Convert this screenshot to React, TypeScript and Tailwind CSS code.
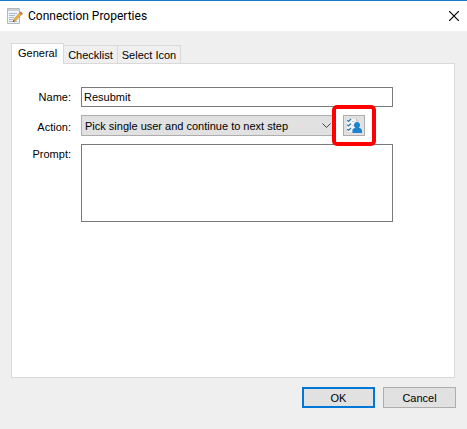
import { useState } from 'react'

const tabs = ['General', 'Checklist', 'Select Icon']

const NotepadIcon = () => (
  <svg width="16" height="16" viewBox="0 0 16 16" aria-hidden="true">
    <path d="M.5.5h12v15H.5z" fill="#f1f4f7" stroke="#b4b9bd" />
    <path d="M1 1h11v2H1z" fill="#c9d0d6" />
    <path d="M2 5.5h8M2 7.5h6M2 9.5h5M2 11.5h4M2 13.5h8" stroke="#a9bccd" />
    <path d="M13.6 3.8l2 1.8-6.8 7-2.6 1 .8-2.7z" fill="#f0b040" stroke="#a8741f" strokeWidth=".5" />
    <path d="M13.6 3.8l2 1.8-1.2 1.3-2.1-1.7z" fill="#d46a5c" />
    <path d="M6 13.9l.5-1.6 1.1 1z" fill="#333" />
  </svg>
)

const UserTasksIcon = () => (
  <svg width="16" height="16" viewBox="0 0 16 16" className="shrink-0" aria-hidden="true">
    <path d="M.5.5h10l2 2.5v11.5H.5z" fill="#f5f5f5" stroke="#d0d3d6" strokeWidth=".6" />
    <path d="M10.5.5V3h2" fill="none" stroke="#a5adb5" strokeWidth=".7" />
    <path d="M6 3.5h3M6 7.5h2M6 11.5h1" stroke="#c0c5ca" strokeWidth=".8" />
    <path d="M1.3 2.2l1.2 1.3L5 1M1.3 6.7l1.2 1.3L5 5.5M1.3 11.2l1.2 1.3L5 10" fill="none" stroke="#2478ad" strokeWidth="1.2" />
    <path d="M11 4c2 0 3 1.4 3 3.2 0 1-.5 2-1.2 2.6 1.8.4 3.2 1.4 3.2 3V15H6.400v-2.200c0-1.600 1.200-2.600 3-3C8.600 9.200 8 8.200 8 7.200 8 5.400 9 4 11 4z" fill="#1b83ce" />
  </svg>
)

const CloseIcon = () => (
  <svg width="10" height="10" viewBox="0 0 10 10" aria-hidden="true">
    <path d="M0 0l10 10M10 0L0 10" stroke="#000" strokeWidth="1.2" />
  </svg>
)

export default function App() {
  const [activeTab, setActiveTab] = useState('General')

  return (
    <div className="flex min-h-screen flex-col bg-[#efefef] font-['Liberation_Sans',Arial,sans-serif] text-[11px] leading-[14px] text-black">
      <header className="flex h-[31px] items-center border-t border-[#1979ca] bg-white pr-[7px] pl-[7px]">
        <NotepadIcon />
        <h1 className="ml-[5px] flex-1 font-['Roboto','Open_Sans',sans-serif] text-[12px]">Connection Properties</h1>
        <button type="button" aria-label="Close" className="pr-px">
          <CloseIcon />
        </button>
      </header>

      <main className="flex flex-1 flex-col pt-3 pr-3 pl-[11px]">
        <div role="tablist" className="flex items-end">
          {tabs.map(tab => (
            <button
              key={tab}
              type="button"
              role="tab"
              aria-selected={tab === activeTab}
              onClick={() => setActiveTab(tab)}
              className={
                tab === activeTab
                  ? 'relative z-10 -mb-px h-[21px] border border-b-0 border-[#d9d9d9] bg-white px-[6px] pb-[2px]'
                  : 'h-[18px] border-t border-r border-[#d9d9d9] px-1'
              }
            >
              {tab}
            </button>
          ))}
        </div>

        <section role="tabpanel" className="flex-1 border border-[#d9d9d9] bg-white pt-[23px] pr-[61px]">
          <form className="grid grid-cols-[59px_1fr] gap-x-[10px] gap-y-2">
            <label htmlFor="name" className="pt-[3px] text-right">Name:</label>
            <input
              id="name"
              defaultValue="Resubmit"
              className="h-5 w-full border border-[#7a7a7a] bg-white px-[2px] outline-none"
            />

            <label htmlFor="action" className="pt-[5px] text-right">Action:</label>
            <div className="flex items-start gap-2">
              <div className="relative flex-1">
                <select
                  id="action"
                  className="block h-[21px] w-full appearance-none border border-[#adadad] bg-[#e1e1e1] px-[3px] outline-none"
                >
                  <option>Pick single user and continue to next step</option>
                </select>
                <svg className="pointer-events-none absolute top-2 right-1 h-[5px] w-[9px]" viewBox="0 0 9 5" aria-hidden="true">
                  <path d="M.5.5l4 4 4-4" fill="none" stroke="#404040" />
                </svg>
              </div>
              <div className="relative mr-[28px]">
                <button
                  type="button"
                  aria-label="Pick users"
                  className="flex h-[21px] w-[22px] items-center justify-center border border-[#adadad] bg-[#e1e1e1]"
                >
                  <UserTasksIcon />
                </button>
                <span className="pointer-events-none absolute -inset-x-[11px] -inset-y-[10px] z-10 rounded-[5px] border-4 border-[#fe0000]" />
              </div>
            </div>

            <label htmlFor="prompt" className="pt-[3px] text-right">Prompt:</label>
            <textarea
              id="prompt"
              className="block h-[78px] w-full resize-none border border-[#7a7a7a] bg-white p-[2px] outline-none"
            />
          </form>
        </section>
      </main>

      <footer className="flex justify-end gap-2 pt-[9px] pr-[11px] pb-[21px]">
        <button type="button" className="h-[21px] w-[73px] border-2 border-[#0078d7] bg-[#e1e1e1]">OK</button>
        <button type="button" className="h-[21px] w-[73px] border border-[#adadad] bg-[#e1e1e1]">Cancel</button>
      </footer>
    </div>
  )
}
